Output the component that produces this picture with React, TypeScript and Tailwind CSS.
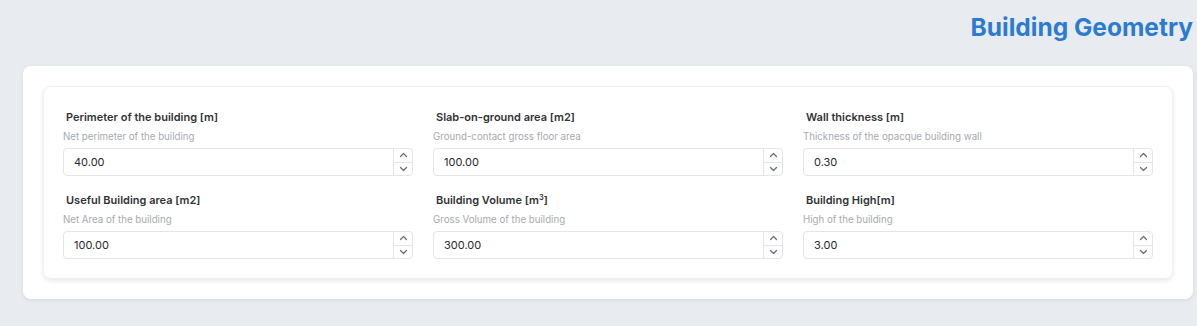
const fields = [
  { label: "Perimeter of the building [m]", hint: "Net perimeter of the building", value: "40.00" },
  { label: "Slab-on-ground area [m2]", hint: "Ground-contact gross floor area", value: "100.00" },
  { label: "Wall thickness [m]", hint: "Thickness of the opacque building wall", value: "0.30" },
  { label: "Useful Building area [m2]", hint: "Net Area of the building", value: "100.00" },
  { label: "Building Volume [m3]", hint: "Gross Volume of the building", value: "300.00", sup: true },
  { label: "Building High[m]", hint: "High of the building", value: "3.00" },
];

function Chevron({ up }: { up?: boolean }) {
  return (
    <svg width="9" height="6" viewBox="0 0 9 6" fill="none">
      <path
        d={up ? "M1.5 4.5 L4.5 1.5 L7.5 4.5" : "M1.5 1.5 L4.5 4.5 L7.5 1.5"}
        stroke="#6b7075"
        strokeWidth="1.3"
        strokeLinecap="round"
        strokeLinejoin="round"
      />
    </svg>
  );
}

function Field({ label, hint, value, sup }: { label: string; hint: string; value: string; sup?: boolean }) {
  return (
    <div className="flex flex-col">
      <span className="pl-[3px] text-[11px] leading-[18px] font-semibold text-[#303336]">
        {sup ? (
          <>
            Building Volume [m<sup className="text-[7.5px]">3</sup>]
          </>
        ) : (
          label
        )}
      </span>
      <span className="mt-[3px] text-[9.7px] leading-[16px] text-[#a6aab0]">{hint}</span>
      <div className="mt-[3px] flex h-[28px] rounded-[4px] border border-[#e2e5e9] bg-white">
        <span className="flex flex-1 items-center pl-[10px] text-[11px] text-[#26292c]">{value}</span>
        <div className="flex w-[19px] flex-col border-l border-[#e2e5e9]">
          <div className="flex flex-1 items-center justify-center border-b border-[#e2e5e9]">
            <Chevron up />
          </div>
          <div className="flex flex-1 items-center justify-center">
            <Chevron />
          </div>
        </div>
      </div>
    </div>
  );
}

export default function App() {
  return (
    <div
      className="h-[326px] w-full bg-[#e8ecf0] pl-[23px] pr-[4px]"
      style={{ fontFamily: "Inter, 'Noto Sans', sans-serif" }}
    >
      <div className="flex h-[66px] items-start justify-end pt-[11px]">
        <h1 className="text-[24.5px] leading-[32px] font-bold text-[#2b7bd3]">Building Geometry</h1>
      </div>
      <div className="rounded-[8px] bg-white p-5 shadow-[0_1px_4px_rgba(0,0,0,0.08)]">
        <div className="grid grid-cols-3 gap-x-5 gap-y-[15px] rounded-[8px] border border-[#eef0f2] px-[19px] pt-[21px] pb-[19px] shadow-[0_2px_5px_rgba(0,0,0,0.09)]">
          {fields.map((f) => (
            <Field key={f.label} {...f} />
          ))}
        </div>
      </div>
    </div>
  );
}
